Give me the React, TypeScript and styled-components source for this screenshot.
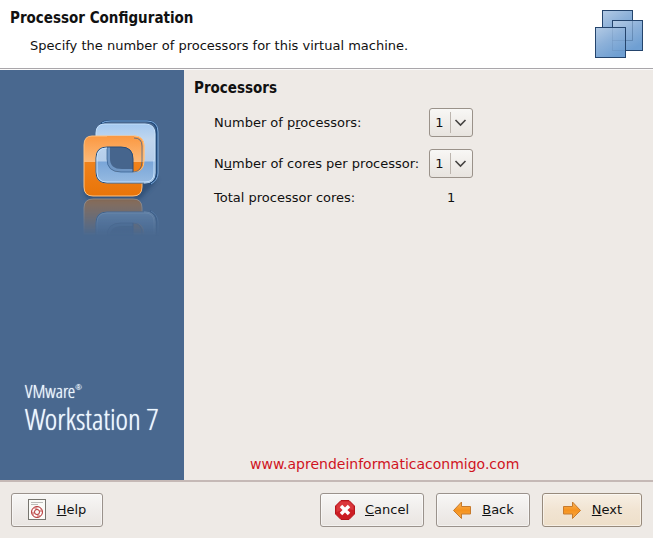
import React, { useId, useState } from 'react';
import styled, { createGlobalStyle } from 'styled-components';

const uiFont = '"DejaVu Sans", sans-serif';
const headingFont = '"DejaVu Sans Condensed", "DejaVu Sans", sans-serif';

const GlobalStyle = createGlobalStyle`
  *, *::before, *::after { box-sizing: border-box; }
  body { margin: 0; background: #eeeae6; }
  body, button, select { font: 13px/20px ${uiFont}; color: #111; }
  h1, h2, p { margin: 0; }
`;

const Wizard = styled.form`
  display: grid;
  grid-template-rows: auto 1fr auto;
  min-height: 100vh;
`;

const Header = styled.header`
  display: flex;
  justify-content: space-between;
  padding: 8px 10px 11px;
  background: #fff;
  border-bottom: 1px solid #fbfafa;
  box-shadow: inset 0 -1px #a9a6aa;
`;

const Title = styled.h1`
  font: bold 15px/20px ${headingFont};
`;

const Subtitle = styled.p`
  padding: 8px 0 0 20px;
`;

const Body = styled.div`
  display: flex;
`;

const Banner = styled.aside`
  display: flex;
  flex-direction: column;
  justify-content: space-between;
  flex: none;
  width: 184px;
  padding: 48px 22px 45px 25px;
  background: #49688f;
`;

const BannerLogo = styled.svg`
  align-self: flex-end;
  display: block;
`;

const Product = styled.div`
  font-family: "Open Sans Condensed Light", "Open Sans Condensed", sans-serif;
  color: #eef8ff;
  text-shadow: 0 0 1px #eef8ff;
  white-space: nowrap;
`;

const Vendor = styled.p`
  display: flex;
  align-items: flex-start;
  font-size: 19px;
  line-height: 24px;
`;

const Registered = styled.span`
  font-size: 8px;
  line-height: 16px;
`;

const ProductName = styled.p`
  font-size: 30px;
  line-height: 32px;
`;

const Main = styled.main`
  display: flex;
  flex-direction: column;
  flex: 1;
  padding: 8px 10px 6px;
`;

const SectionTitle = styled.h2`
  font: bold 15px/20px ${headingFont};
`;

const Fields = styled.div`
  display: grid;
  grid-template-columns: max-content max-content;
  align-items: center;
  column-gap: 10px;
  row-gap: 12px;
  padding: 10px 0 0 20px;
  line-height: 16px;
`;

const FieldLabel = styled.label``;

const Total = styled.output`
  text-align: center;
`;

const SelectBox = styled.span`
  position: relative;
  display: block;
  height: 29px;
`;

const Select = styled.select`
  appearance: none;
  display: block;
  width: 44px;
  height: 29px;
  padding: 0 0 0 5px;
  border: 1px solid #9a928a;
  border-radius: 3px;
  background: linear-gradient(#f8f7f5, #e8e4df);
`;

const SelectArrow = styled.svg`
  position: absolute;
  right: 1px;
  top: 1px;
  pointer-events: none;
`;

const SiteLink = styled.a`
  align-self: flex-start;
  margin-top: auto;
  margin-left: 56px;
  font-size: 14px;
  color: #d0141e;
  text-decoration: none;
`;

const Footer = styled.footer`
  display: flex;
  gap: 12px;
  padding: 11px;
  border-top: 2px solid #c5b9b6;
`;

const Button = styled.button<{ $primary?: boolean; $width: number }>`
  display: flex;
  align-items: center;
  justify-content: center;
  gap: 10px;
  min-width: ${(p) => p.$width}px;
  height: 34px;
  padding: 0 12px;
  border: 1px solid ${(p) => (p.$primary ? '#978a7c' : '#9a928c')};
  border-radius: 3px;
  background: ${(p) =>
    p.$primary ? 'linear-gradient(#f7efe4, #f1e4d2 50%, #eedfc9)' : 'linear-gradient(#f8f7f6, #f0edeb 50%, #e9e5e1)'};
  box-shadow: inset 0 0 0 1px #ffffff80;
`;

const Spacer = styled.span`
  flex: 1;
`;

const Icon = styled.svg`
  display: block;
  flex: none;
`;

function MachinesIcon() {
  const id = useId();
  return (
    <Icon width="50" height="50" viewBox="0 0 50 50" aria-hidden="true">
      <defs>
        <linearGradient id={id} x1="0" y1="0" x2="0.6" y2="1">
          <stop offset="0" stopColor="#b4cbe5" />
          <stop offset="0.5" stopColor="#8db1d9" />
          <stop offset="1" stopColor="#6f9fd2" />
        </linearGradient>
      </defs>
      <g fill={`url(#${id})`} stroke="#24446c">
        <rect x="9.5" y="2.5" width="30" height="30" />
        <rect x="19.5" y="12.5" width="30" height="30" />
        <path d="M19.500 32.500h20v-20" fill="none" strokeOpacity="0.3" />
        <rect x="2.5" y="19.500" width="30" height="30" />
        <path d="M19.500 19.500v23h13M19.500 32.500h13" fill="none" strokeOpacity="0.1" />
      </g>
    </Icon>
  );
}

function Logo() {
  const id = useId();
  const ref = (name: string) => `url(#${id}${name})`;
  return (
    <BannerLogo width="82" height="122" viewBox="0 0 82 122" aria-hidden="true">
      <defs>
        <linearGradient id={`${id}blue`} gradientUnits="userSpaceOnUse" x1="0" y1="6" x2="0" y2="66">
          <stop offset="0" stopColor="#a4c9f0" />
          <stop offset="0.25" stopColor="#c0d6ee" />
          <stop offset="0.62" stopColor="#b4cdea" />
          <stop offset="0.63" stopColor="#79a5d8" />
          <stop offset="1" stopColor="#98bce2" />
        </linearGradient>
        <linearGradient id={`${id}orange`} gradientUnits="userSpaceOnUse" x1="0" y1="18" x2="0" y2="79">
          <stop offset="0" stopColor="#fb9841" />
          <stop offset="0.42" stopColor="#fcb978" />
          <stop offset="0.43" stopColor="#f0821b" />
          <stop offset="1" stopColor="#e87408" />
        </linearGradient>
        <linearGradient id={`${id}fade`} x1="0" y1="0" x2="0" y2="1">
          <stop offset="0" stopColor="#fff" stopOpacity="0.42" />
          <stop offset="1" stopColor="#fff" stopOpacity="0" />
        </linearGradient>
        <mask id={`${id}mask`} maskUnits="userSpaceOnUse" x="0" y="80" width="82" height="42">
          <rect y="80" width="82" height="38" fill={ref('fade')} />
        </mask>
        <filter id={`${id}soft`} x="-20%" y="-20%" width="140%" height="140%">
          <feGaussianBlur stdDeviation="2" />
        </filter>
        <g id={`${id}mark`}>
          <path d="M21 6Q23 3 31 3H66Q77 3 77 14V55Q77 63 70 66" fill="none" stroke="#204a7b" strokeWidth="2" />
          <path d="M22 5Q24 3 31 3H67Q78 3 78 14V55Q78 62 71 66" fill="none" stroke="#7eabdc" />
          <path
            d="M25 6H65Q75 6 75 16V55Q75 65 65 65H27Q16 65 16 54V15Q16 6 25 6ZM28 29V45Q28 54 38 54H62V41Q62 29 50 29Z"
            fillRule="evenodd"
            fill={ref('blue')}
            stroke="#c6e1fa"
          />
          <path
            d="M12 18H54Q64 18 64 28V42Q64 54 52 54H40Q28 54 28 42V29H27Q16 29 16 40V54Q16 65 27 65H62V69Q62 78 53 78H13Q4 78 4 69V27Q4 18 12 18Z"
            fill={ref('orange')}
            stroke="#ffc180"
          />
          <path
            d="M16 40Q16 29 27 29H28V42Q28 54 40 54H52Q64 54 64 42H75V55Q75 65 65 65H27Q16 65 16 54Z"
            fill={ref('blue')}
          />
          <path d="M27 29H41Q53 29 53 41V54H54Q64 54 64 43V28Q64 18 54 18H27Z" fill={ref('orange')} />
          <path d="M27 29H41Q53 29 53 41V54H41Q27 54 27 41Z" fill="#6f96c4" />
          <path d="M30 29H41Q53 29 53 41V51H42Q30 51 30 41Z" fill="#46658d" />
          <path d="M53 54Q64 54 64 43V28Q64 18 54 18" fill="none" stroke="#ffc180" />
          <path d="M27 29V41Q27 54 41 54H53Q62 54 62 43V28Q62 20 54 20" fill="none" stroke="#315b8c" strokeOpacity="0.7" />
          <path d="M53 54V41Q53 29 41 29H27Q16 29 16 40V54Q16 65 27 65H64" fill="none" stroke="#284c78" />
          <path d="M17 54V40Q17 30 27 30M17 54Q17 64 27 64H65Q74 64 74 55V42" fill="none" stroke="#c6e1fa" />
        </g>
      </defs>
      <path d="M4 67Q3 82 12 81H60L78 61" fill="#25466e" opacity="0.7" filter={ref('soft')} />
      <use href={`#${id}mark`} />
      <g mask={ref('mask')}>
        <use href={`#${id}mark`} transform="translate(0 159) scale(1 -1)" />
      </g>
    </BannerLogo>
  );
}

function HelpIcon() {
  return (
    <Icon width="19" height="22" viewBox="0 0 19 22" aria-hidden="true">
      <rect x="0.5" y="0.5" width="17" height="20" fill="#fbfbf8" stroke="#77756f" />
      <path d="M3 3.500h12M3 5.500h7" stroke="#bdbdb9" />
      <circle cx="9" cy="13" r="4" fill="none" stroke="#e0a09c" strokeWidth="3" />
      <circle cx="9" cy="13" r="4" fill="none" stroke="#fff" strokeWidth="2" strokeDasharray="3.2 3.083" />
      <circle cx="9" cy="13" r="5.500" fill="none" stroke="#b5383a" />
      <circle cx="9" cy="13" r="2.500" fill="none" stroke="#b5383a" />
    </Icon>
  );
}

function CancelIcon() {
  return (
    <Icon width="20" height="20" viewBox="0 0 20 20" aria-hidden="true">
      <path d="M6 .5h8L19.500 6v8L14 19.500H6L.5 14V6Z" fill="#cc1d24" stroke="#b5161c" strokeLinejoin="round" />
      <path d="M6 1.500h8L18.500 6v4Q10 8 1.500 12V6Z" fill="#e24a4c" opacity="0.6" />
      <path d="M6 6l8 8M14 6l-8 8" stroke="#fff" strokeWidth="3.500" />
    </Icon>
  );
}

function ArrowIcon({ back = false }: { back?: boolean }) {
  const id = useId();
  return (
    <Icon width="20" height="20" viewBox="0 0 20 20" aria-hidden="true">
      <defs>
        <linearGradient id={id} x1="0" y1="0" x2="0" y2="1">
          <stop offset="0" stopColor="#fbb65a" />
          <stop offset="0.5" stopColor="#f5921e" />
          <stop offset="1" stopColor="#f9a942" />
        </linearGradient>
      </defs>
      <path
        d="M1.500 6.500h9v-4.500L18.500 10.500 10.500 18.500v-4.500h-9Z"
        transform={back ? 'translate(20 0) scale(-1 1)' : undefined}
        fill={`url(#${id})`}
        stroke="#c77a2c"
        strokeLinejoin="round"
      />
    </Icon>
  );
}

function CountSelect({ id, value, onChange }: { id: string; value: number; onChange: (n: number) => void }) {
  return (
    <SelectBox>
      <Select id={id} value={value} onChange={(e) => onChange(Number(e.target.value))}>
        {[1, 2, 4].map((n) => (
          <option key={n}>{n}</option>
        ))}
      </Select>
      <SelectArrow width="22" height="27" viewBox="0 0 22 27" aria-hidden="true">
        <path d="M.5 3v21" stroke="#bcb5ae" />
        <path d="M5.500 11l5 5 5-5" fill="none" stroke="#454341" strokeWidth="1.6" />
      </SelectArrow>
    </SelectBox>
  );
}

export default function App() {
  const [processors, setProcessors] = useState(1);
  const [cores, setCores] = useState(1);

  return (
    <>
      <GlobalStyle />
      <Wizard onSubmit={(e) => e.preventDefault()}>
        <Header>
          <div>
            <Title>Processor Configuration</Title>
            <Subtitle>Specify the number of processors for this virtual machine.</Subtitle>
          </div>
          <MachinesIcon />
        </Header>
        <Body>
          <Banner>
            <Logo />
            <Product>
              <Vendor>
                VMware<Registered>®</Registered>
              </Vendor>
              <ProductName>Workstation 7</ProductName>
            </Product>
          </Banner>
          <Main>
            <SectionTitle>Processors</SectionTitle>
            <Fields>
              <FieldLabel htmlFor="processors">
                Number of p<u>r</u>ocessors:
              </FieldLabel>
              <CountSelect id="processors" value={processors} onChange={setProcessors} />
              <FieldLabel htmlFor="cores">
                N<u>u</u>mber of cores per processor:
              </FieldLabel>
              <CountSelect id="cores" value={cores} onChange={setCores} />
              <FieldLabel htmlFor="total">Total processor cores:</FieldLabel>
              <Total id="total">{processors * cores}</Total>
            </Fields>
            <SiteLink href="#site">www.aprendeinformaticaconmigo.com</SiteLink>
          </Main>
        </Body>
        <Footer>
          <Button type="button" $width={92}>
            <HelpIcon />
            <span><u>H</u>elp</span>
          </Button>
          <Spacer />
          <Button type="button" $width={104}>
            <CancelIcon />
            <span><u>C</u>ancel</span>
          </Button>
          <Button type="button" $width={94}>
            <ArrowIcon back />
            <span><u>B</u>ack</span>
          </Button>
          <Button type="submit" $primary $width={100}>
            <ArrowIcon />
            <span><u>N</u>ext</span>
          </Button>
        </Footer>
      </Wizard>
    </>
  );
}
